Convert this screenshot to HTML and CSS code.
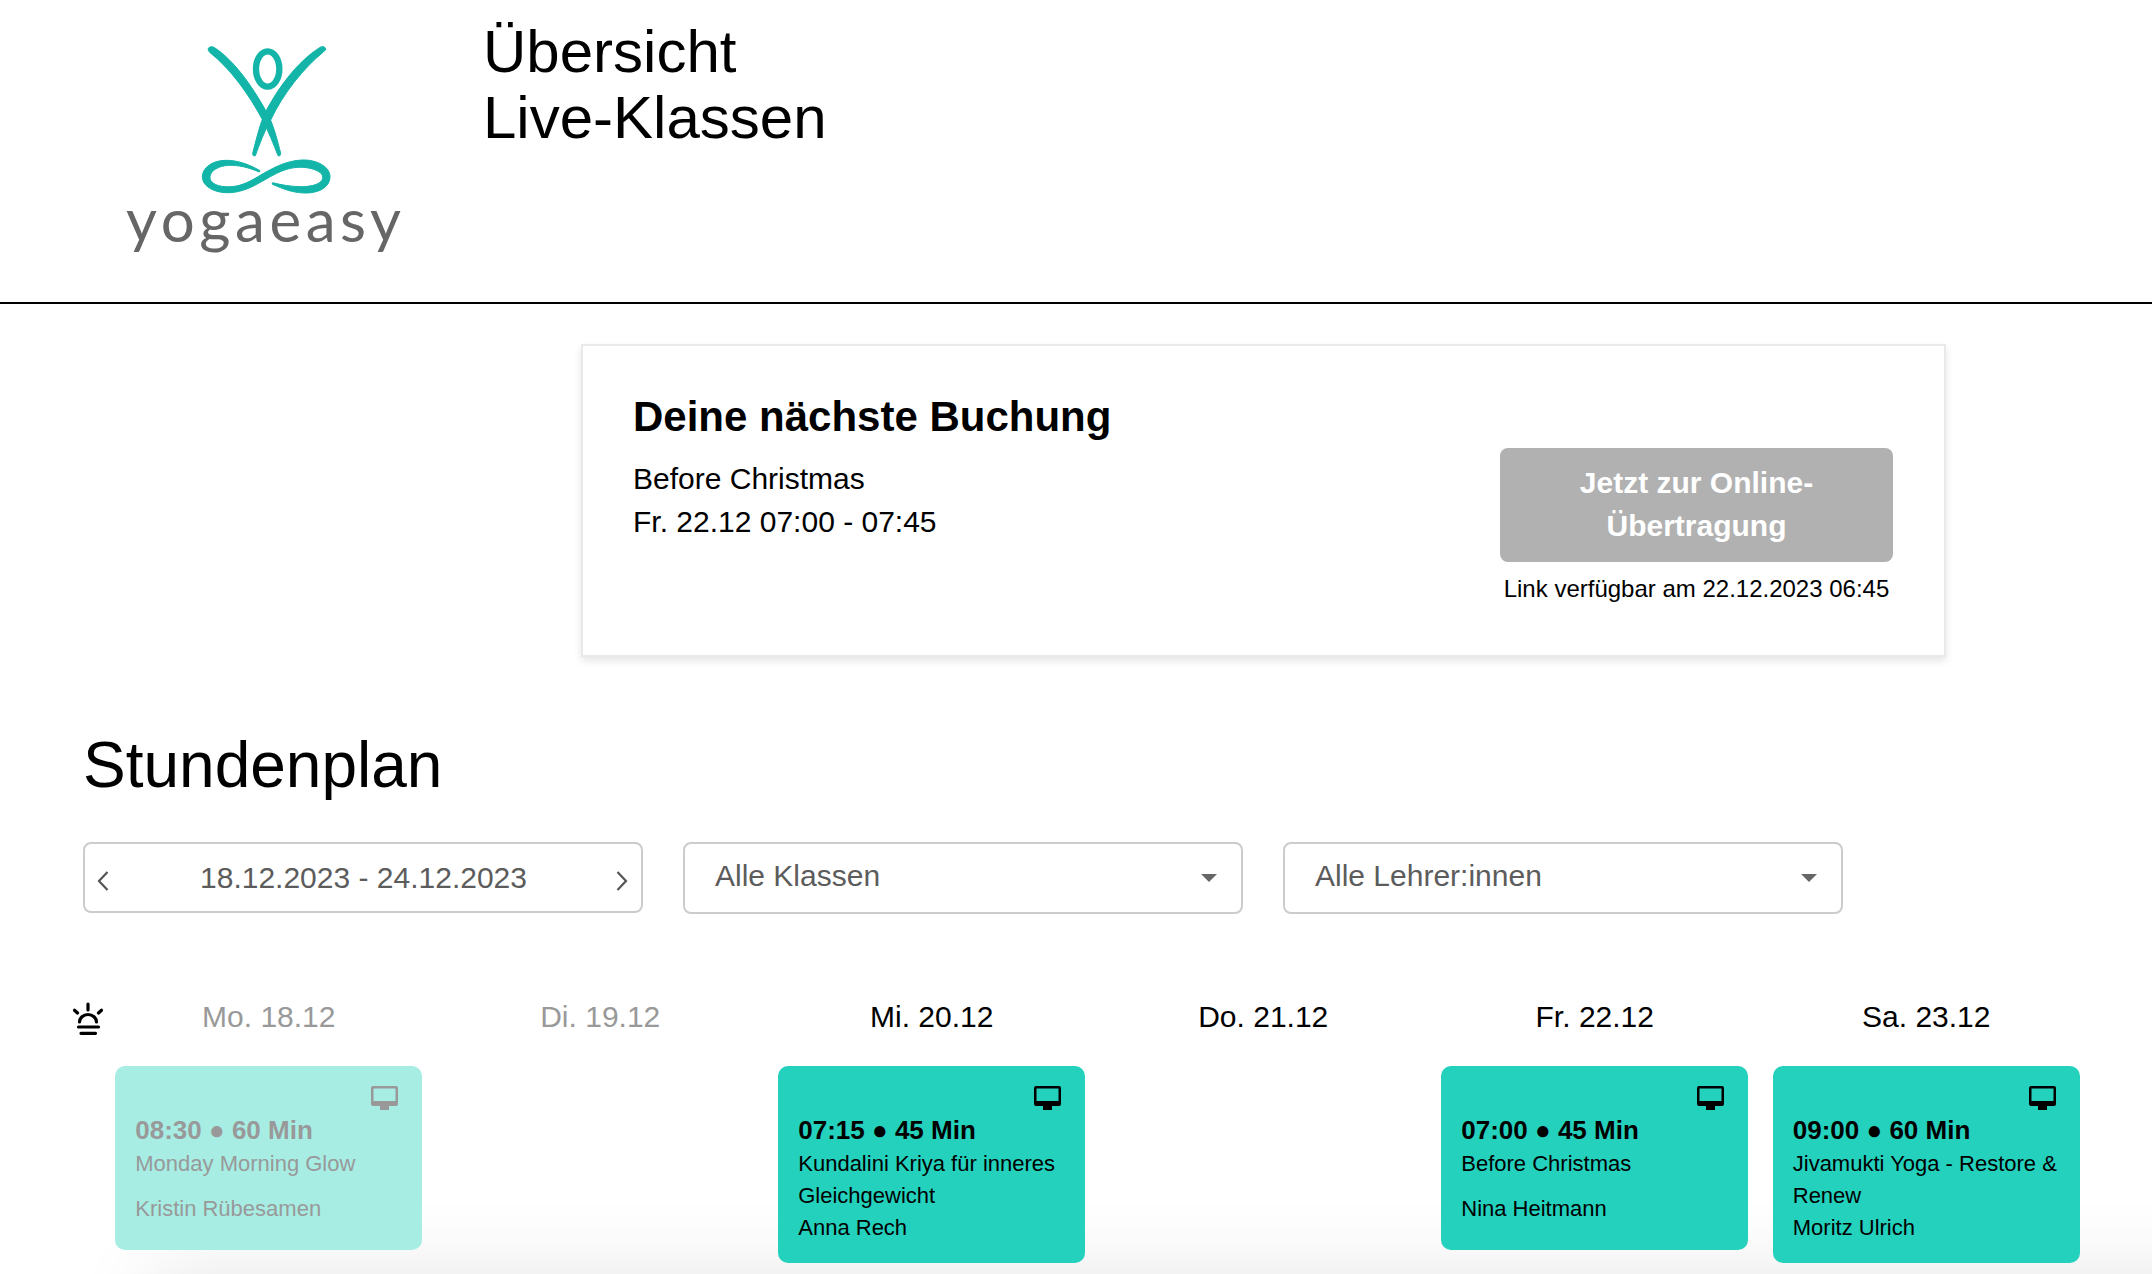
FILE: index.html
```html
<!DOCTYPE html>
<html lang="de">
<head>
<meta charset="utf-8">
<title>Übersicht Live-Klassen</title>
<link rel="stylesheet" href="styles.css">
</head>
<body>
<div class="bottom-shadow"></div>
<header class="site-header">
  <div class="logo">
    <svg class="logo-mark" viewBox="0 0 600 480" aria-hidden="true">
      <path d="M145 25 Q150 17 162 22 C225 62 285 150 328 232 C342 262 352 300 362 340 Q362 350 354 347 C340 310 325 275 308 240 C265 160 210 85 150 38 Q143 32 145 25 Z"/>
      <path d="M497 25 Q492 17 482 21 C410 65 350 150 312 225 C298 260 288 300 278 340 Q278 350 286 347 C298 315 312 275 332 240 C370 160 430 85 490 36 Q498 30 497 25 Z"/>
      <ellipse class="logo-head" cx="323" cy="87" rx="35" ry="53"/>
      <path d="M300 392 C265 372 230 360 195 361 C155 362 127 385 127 410 C127 440 165 460 210 458 C265 455 300 425 350 400 C385 382 420 378 450 385 C478 392 490 402 488 415 C485 432 455 440 425 440 C395 440 365 435 338 428 L336 432 C370 448 405 460 440 459 C480 458 510 440 510 410 C510 380 470 358 425 360 C370 362 320 395 280 418 C250 435 225 442 195 440 C165 438 148 425 150 410 C152 392 175 378 205 376 C235 375 265 382 298 396 Z"/>
    </svg>
    <span class="logo-word">yogaeasy</span>
  </div>
  <h1 class="page-title">Übersicht<br>Live-Klassen</h1>
</header>

<section class="booking">
  <div class="booking-info">
    <h2 class="booking-heading">Deine nächste Buchung</h2>
    <p class="booking-line">Before Christmas</p>
    <p class="booking-line">Fr. 22.12 07:00 - 07:45</p>
  </div>
  <div class="booking-action">
    <div class="stream-button">Jetzt zur Online-<br>Übertragung</div>
    <p class="stream-note">Link verfügbar am 22.12.2023 06:45</p>
  </div>
</section>

<section class="schedule">
  <h2 class="schedule-title">Stundenplan</h2>
  <div class="filters">
    <div class="filter filter-date">
      <svg class="chevron" viewBox="0 0 12 20" aria-hidden="true"><path d="M10.5 1 L2 10 L10.5 19"/></svg>
      <span class="filter-date-text">18.12.2023 - 24.12.2023</span>
      <svg class="chevron" viewBox="0 0 12 20" aria-hidden="true"><path d="M1.5 1 L10 10 L1.5 19"/></svg>
    </div>
    <div class="filter filter-select"><span>Alle Klassen</span><i class="caret"></i></div>
    <div class="filter filter-select"><span>Alle Lehrer:innen</span><i class="caret"></i></div>
  </div>

  <div class="week">
    <div class="early">
      <svg class="early-icon" viewBox="0 0 30 36" aria-hidden="true">
        <path d="M15 2 V8 M1.5 8.3 L4.5 11 M28.5 8.3 L25.5 11 M6.5 20 A8.5 7.500 0 0 1 23.5 20 M5.5 25 H25.5 M8 31.3 H22.5"/>
      </svg>
    </div>

    <div class="day day-past">
      <div class="day-label">Mo. 18.12</div>
      <article class="lesson lesson-past">
        <svg class="lesson-icon" viewBox="0 0 27 24" aria-hidden="true"><path fill-rule="evenodd" d="M2 0 H25 Q27 0 27 2 V18 Q27 20 25 20 H18 V24 H9 V20 H2 Q0 20 0 18 V2 Q0 0 2 0 Z M2.5 2.5 V15 H24.500 V2.5 Z"/></svg>
        <div class="lesson-time">08:30 ● 60 Min</div>
        <div class="lesson-name">Monday Morning Glow</div>
        <div class="lesson-teacher">Kristin Rübesamen</div>
      </article>
    </div>

    <div class="day day-past">
      <div class="day-label">Di. 19.12</div>
    </div>

    <div class="day">
      <div class="day-label">Mi. 20.12</div>
      <article class="lesson">
        <svg class="lesson-icon" viewBox="0 0 27 24" aria-hidden="true"><path fill-rule="evenodd" d="M2 0 H25 Q27 0 27 2 V18 Q27 20 25 20 H18 V24 H9 V20 H2 Q0 20 0 18 V2 Q0 0 2 0 Z M2.5 2.5 V15 H24.500 V2.5 Z"/></svg>
        <div class="lesson-time">07:15 ● 45 Min</div>
        <div class="lesson-name">Kundalini Kriya für inneres Gleichgewicht</div>
        <div class="lesson-teacher">Anna Rech</div>
      </article>
    </div>

    <div class="day">
      <div class="day-label">Do. 21.12</div>
    </div>

    <div class="day">
      <div class="day-label">Fr. 22.12</div>
      <article class="lesson">
        <svg class="lesson-icon" viewBox="0 0 27 24" aria-hidden="true"><path fill-rule="evenodd" d="M2 0 H25 Q27 0 27 2 V18 Q27 20 25 20 H18 V24 H9 V20 H2 Q0 20 0 18 V2 Q0 0 2 0 Z M2.5 2.5 V15 H24.500 V2.5 Z"/></svg>
        <div class="lesson-time">07:00 ● 45 Min</div>
        <div class="lesson-name">Before Christmas</div>
        <div class="lesson-teacher">Nina Heitmann</div>
      </article>
    </div>

    <div class="day">
      <div class="day-label">Sa. 23.12</div>
      <article class="lesson">
        <svg class="lesson-icon" viewBox="0 0 27 24" aria-hidden="true"><path fill-rule="evenodd" d="M2 0 H25 Q27 0 27 2 V18 Q27 20 25 20 H18 V24 H9 V20 H2 Q0 20 0 18 V2 Q0 0 2 0 Z M2.5 2.5 V15 H24.500 V2.5 Z"/></svg>
        <div class="lesson-time">09:00 ● 60 Min</div>
        <div class="lesson-name">Jivamukti Yoga - Restore &amp; Renew</div>
        <div class="lesson-teacher">Moritz Ulrich</div>
      </article>
    </div>
  </div>
</section>
</body>
</html>
```

FILE: styles.css
```css
* {
  box-sizing: border-box;
}

html,
body {
  margin: 0;
  height: 1274px;
  background: #fff;
}

html {
  overflow: hidden;
}

body {
  font-family: "Liberation Sans", Arial, sans-serif;
  color: #000;
}

h1,
h2,
p {
  margin: 0;
  font-weight: normal;
}

.bottom-shadow {
  position: fixed;
  left: 150px;
  right: -200px;
  bottom: -150px;
  height: 150px;
  box-shadow: 0 0 80px rgba(0, 0, 0, 0.1);
}

/* Header */
.site-header {
  display: flex;
  height: 304px;
  border-bottom: 2px solid #000;
}

.logo {
  width: 483px;
  padding: 40px 0 0 126px;
}

.logo-mark {
  display: block;
  width: 200px;
  height: 160px;
  margin-left: 34px;
  fill: #12b5a8;
  stroke: #12b5a8;
  stroke-width: 3;
}

.logo-head {
  fill: none;
  stroke-width: 19;
}

.logo-word {
  display: block;
  margin-top: -11px;
  font-family: Lato, sans-serif;
  font-weight: 400;
  font-size: 60px;
  line-height: 60px;
  letter-spacing: 4.6px;
  color: #666;
}

.page-title {
  padding-top: 19px;
  font-size: 60px;
  line-height: 66px;
}

/* Booking card */
.booking {
  display: flex;
  justify-content: space-between;
  width: 1365px;
  height: 313px;
  margin: 40px 0 0 581px;
  padding: 45px 51px 0 50px;
  border: 2px solid #e9e9e9;
  box-shadow: 0 4px 8px rgba(0, 0, 0, 0.1);
}

.booking-heading {
  margin-bottom: 14px;
  font-size: 42px;
  font-weight: bold;
  line-height: 52px;
}

.booking-line {
  font-size: 30px;
  line-height: 43px;
}

.booking-action {
  width: 393px;
  padding-top: 57px;
  text-align: center;
}

.stream-button {
  height: 114px;
  padding-top: 13px;
  border-radius: 8px;
  background: #b1b1b1;
  color: #fff;
  font-size: 30px;
  font-weight: bold;
  line-height: 43px;
}

.stream-note {
  margin-top: 9px;
  font-size: 24px;
  line-height: 36px;
  white-space: nowrap;
}

/* Schedule */
.schedule {
  padding: 0 0 0 73px;
}

.schedule-title {
  margin: 71px 0 0 10px;
  font-size: 64px;
  line-height: 74px;
}

.filters {
  display: flex;
  align-items: flex-start;
  gap: 40px;
  margin: 40px 0 0 10px;
}

.filter {
  display: flex;
  align-items: center;
  justify-content: space-between;
  width: 560px;
  height: 71px;
  border: 2px solid #ccc;
  border-radius: 8px;
  color: #5c5c5c;
  font-size: 30px;
}

.filter-date {
  padding: 0 13px 0 12px;
}

.filter-date-text {
  margin-left: 2px;
}

.filter-select {
  height: 72px;
  padding: 0 24px 4px 30px;
}

.chevron {
  width: 12px;
  height: 20px;
  margin-top: 6px;
  fill: none;
  stroke: #555;
  stroke-width: 2.2;
}

.caret {
  width: 0;
  height: 0;
  margin-top: 4px;
  border-top: 8px solid #666;
  border-left: 8px solid transparent;
  border-right: 8px solid transparent;
}

.week {
  display: grid;
  grid-template-columns: 30px repeat(6, 331.5px);
  margin-top: 85px;
  align-items: start;
}

.early-icon {
  display: block;
  width: 30px;
  height: 36px;
  margin-top: 3px;
  fill: none;
  stroke: #000;
  stroke-width: 3.2;
  stroke-linecap: round;
}

.day-label {
  height: 67px;
  font-size: 30px;
  line-height: 36px;
  text-align: center;
}

.day-past .day-label {
  color: #999;
}

.lesson {
  position: relative;
  width: 307px;
  min-height: 184px;
  margin: 0 auto;
  padding: 46px 20px 19px;
  border-radius: 10px;
  background: #24d1bd;
  font-size: 22px;
  line-height: 32px;
}

.lesson-past {
  background: #a7ede4;
  color: #999;
}

.lesson-icon {
  position: absolute;
  top: 20px;
  right: 24px;
  width: 27px;
  height: 24px;
  fill: currentColor;
}

.lesson-time {
  font-size: 26px;
  font-weight: bold;
  line-height: 36px;
}

.lesson-name {
  min-height: 45px;
}
```
